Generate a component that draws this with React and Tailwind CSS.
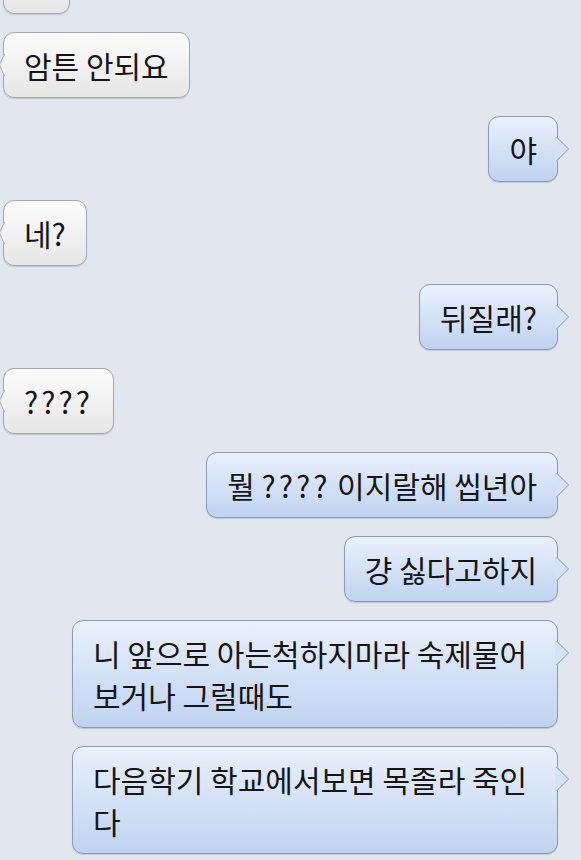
import React from 'react';

const Q = () => <span className="tracking-[3px]">????</span>;

const messages = [
  { me: false, text: '암튼 안되요' },
  { me: true, text: '야' },
  { me: false, text: '네?' },
  { me: true, text: '뒤질래?' },
  { me: false, text: <Q /> },
  { me: true, text: <>뭘 <Q /> 이지랄해  씹년아</> },
  { me: true, text: '걍 싫다고하지' },
  { me: true, text: '니 앞으로 아는척하지마라 숙제물어 보거나 그럴때도' },
  { me: true, text: '다음학기 학교에서보면 목졸라 죽인다' },
];

function TailRight() {
  return (
    <svg className="absolute right-[-13px] top-[19px]" width="15" height="26" viewBox="0 0 15 26">
      <path d="M0 1 L2 1 L14 13 L2 25 L0 25 Z" fill="#d4e2f6" />
      <path d="M1.5 1 L13.5 13 L1.5 25" fill="none" stroke="#8a9bb4" strokeWidth="1" />
    </svg>
  );
}

function TailLeft() {
  return (
    <svg className="absolute left-[-5px] top-[20px]" width="7" height="24" viewBox="0 0 7 24">
      <path d="M7 1 L5 1 L0 12 L5 23 L7 23 Z" fill="#f2f2f2" />
      <path d="M5.5 1 L0.5 12 L5.5 23" fill="none" stroke="#a6a8ad" strokeWidth="1" />
    </svg>
  );
}

function Bubble({ me, text }) {
  if (me) {
    return (
      <div className="flex justify-end pr-[23px]">
        <div className="relative max-w-[486px] rounded-[11px] border border-[#8a9bb4] bg-gradient-to-b from-[#e9f0fb] to-[#bfd3f0] px-5 py-[11px] text-[30px] leading-[42px] text-[#151515] shadow-[0_1px_1px_rgba(0,0,0,0.15)]">
          {text}
          <TailRight />
        </div>
      </div>
    );
  }
  return (
    <div className="flex justify-start pl-[3px]">
      <div className="relative rounded-[11px] border border-[#a6a8ad] bg-gradient-to-b from-[#fcfcfc] to-[#e6e6e6] px-5 py-[11px] text-[30px] leading-[42px] text-[#151515] shadow-[0_1px_1px_rgba(0,0,0,0.15)]">
        {text}
        <TailLeft />
      </div>
    </div>
  );
}

export default function App() {
  return (
    <div
      className="min-h-screen w-[581px] overflow-hidden bg-[#e2e6ee]"
      style={{ fontFamily: '"Noto Sans CJK KR", "Noto Sans", sans-serif' }}
    >
      <div className="flex flex-col gap-[18px] pb-6">
        <div className="pl-[3px]">
          <div className="mt-[-52px] h-[66px] w-[67px] rounded-[11px] border border-[#a6a8ad] bg-gradient-to-b from-[#fcfcfc] to-[#e6e6e6] shadow-[0_1px_1px_rgba(0,0,0,0.15)]"></div>
        </div>
        {messages.map((m, i) => (
          <Bubble key={i} me={m.me} text={m.text} />
        ))}
      </div>
    </div>
  );
}
